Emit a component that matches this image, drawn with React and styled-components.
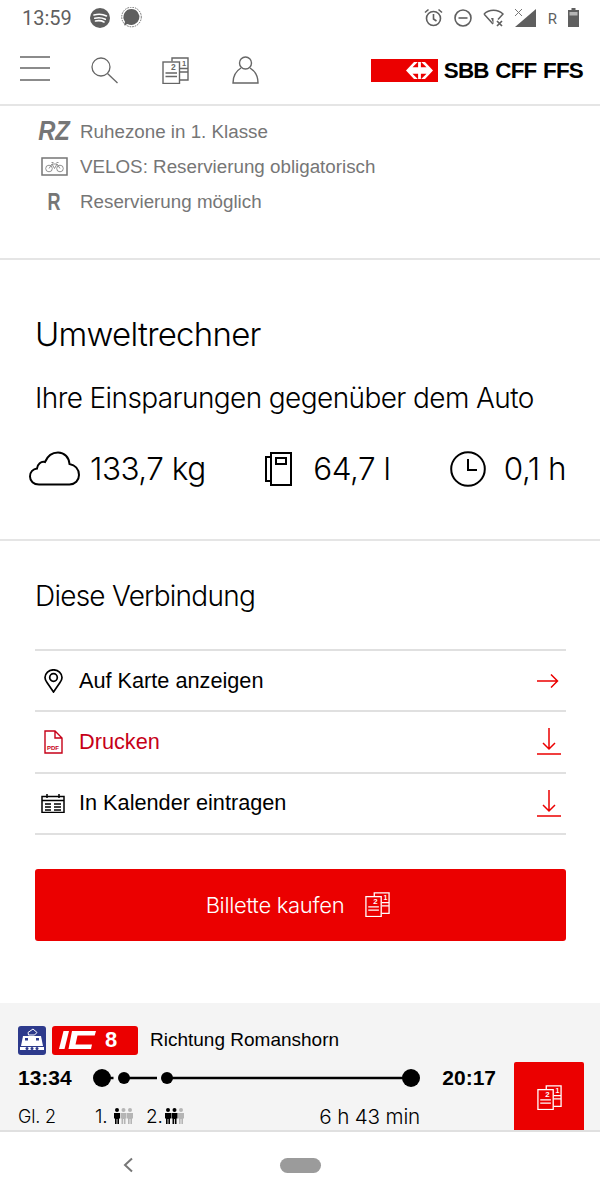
import styled, { createGlobalStyle } from "styled-components";

const GlobalStyle = createGlobalStyle`
  html, body {
    margin: 0;
    padding: 0;
    background: white;
  }
  * {
    box-sizing: border-box;
  }
`;

const RED = "#eb0000";
const LIGHT = `Inter, "Liberation Sans", sans-serif`;
const SANS = `"Liberation Sans", Arial, sans-serif`;

const Page = styled.div`
  width: 600px;
  height: 1200px;
  display: flex;
  flex-direction: column;
  overflow: hidden;
  font-family: ${SANS};
  color: black;
`;

const StatusBar = styled.div`
  height: 35px;
  display: flex;
  align-items: center;
  padding: 0 21px 0 22px;
  color: #5f5f5f;
`;

const Clock = styled.span`
  font-family: Roboto, sans-serif;
  font-size: 20px;
  width: 58px;
`;

const StatusLeft = styled.div`
  display: flex;
  align-items: center;
  gap: 10px;
  flex: 1;
`;

const StatusRight = styled.div`
  display: flex;
  align-items: center;
  gap: 11px;
`;

const RoamingR = styled.span`
  font-family: Roboto, sans-serif;
  font-size: 15px;
  margin: 2px 0 0 0;
`;

const Header = styled.div`
  height: 71px;
  border-bottom: 2px solid #e5e5e5;
  display: flex;
  align-items: center;
  padding: 1px 17px 0 20px;
`;

const NavIcons = styled.div`
  display: flex;
  align-items: center;
  flex: 1;
  gap: 43.5px;
  color: #666;
`;

const MenuButton = styled.span`
  display: flex;
  margin: 0 -2.5px 3px 0;
`;

const Logo = styled.div`
  display: flex;
  align-items: center;
  gap: 6px;
  margin-top: 1px;
`;

const LogoFlag = styled.div`
  width: 67px;
  height: 23px;
  background: ${RED};
  display: flex;
  align-items: center;
  justify-content: flex-end;
  padding-right: 5px;
`;

const LogoText = styled.span`
  font-family: ${SANS};
  font-weight: 700;
  font-size: 22.4px;
  letter-spacing: -0.75px;
  word-spacing: 1px;
`;

const Legend = styled.section`
  height: 154px;
  border-bottom: 2px solid #e5e5e5;
  padding: 8px 0 0 36px;
  display: flex;
  flex-direction: column;
`;

const LegendRow = styled.div`
  height: 35px;
  display: flex;
  align-items: center;
  gap: 8px;
  color: #767676;
  font-family: ${SANS};
  font-size: 18.8px;
`;

const LegendMark = styled.span`
  width: 36px;
  display: flex;
  justify-content: center;
  font-family: ${SANS};
  font-weight: 700;
  font-style: ${(p) => (p.italic ? "italic" : "normal")};
  font-size: ${(p) => p.size || 24}px;
  transform: scaleX(${(p) => p.squeeze || 1});
  color: #767676;
`;

const Impact = styled.section`
  height: 281px;
  border-bottom: 2px solid #e5e5e5;
  padding: 51px 34px 0 29px;
`;

const Title = styled.h2`
  margin: 0 0 0 6px;
  font-family: ${LIGHT};
  font-weight: 300;
  font-size: 33px;
  line-height: 46px;
  letter-spacing: -0.75px;
`;

const Subtitle = styled.p`
  margin: 21px 0 0 6px;
  font-family: ${LIGHT};
  font-weight: 300;
  font-size: 28px;
  line-height: 40px;
  letter-spacing: -0.6px;
`;

const Stats = styled.div`
  display: flex;
  justify-content: space-between;
  margin-top: 31px;
`;

const Stat = styled.div`
  display: flex;
  align-items: center;
  gap: ${(p) => p.gap}px;
  font-family: ${LIGHT};
  font-weight: 300;
  font-size: 31.5px;
  letter-spacing: -0.5px;
`;

const Connection = styled.section`
  flex: 1;
  padding: 35px 34px 0 35px;
`;

const SectionTitle = styled.h3`
  margin: 0;
  font-family: ${LIGHT};
  font-weight: 300;
  font-size: 28px;
  line-height: 40px;
  letter-spacing: -0.75px;
`;

const Actions = styled.div`
  margin-top: 33px;
  border-top: 2px solid #e0e0e0;
`;

const Action = styled.div`
  height: 61.3px;
  border-bottom: 2px solid #e0e0e0;
  display: flex;
  align-items: center;
  padding: 0 5px 0 6px;
  font-size: 21.7px;
  color: ${(p) => (p.danger ? "#c60018" : "black")};
`;

const ActionIcon = styled.span`
  width: 24px;
  margin-right: 14px;
  display: flex;
  justify-content: center;
`;

const ActionLabel = styled.span`
  flex: 1;
`;

const BuyButton = styled.div`
  margin-top: 34px;
  height: 72px;
  background: ${RED};
  border-radius: 3px;
  color: white;
  display: flex;
  align-items: center;
  justify-content: center;
  gap: 21px;
  padding-right: 5px;
  font-family: ${LIGHT};
  font-weight: 300;
  font-size: 22px;
  letter-spacing: -0.3px;
`;

const Journey = styled.section`
  height: 129px;
  background: #f4f4f4;
  border-bottom: 2px solid #e0e0e0;
  display: flex;
  padding-left: 18px;
  padding-right: 16px;
  justify-content: space-between;
`;

const JourneyInfo = styled.div`
  display: flex;
  flex-direction: column;
  width: 478px;
  padding-top: 22px;
`;

const LineRow = styled.div`
  display: flex;
  align-items: center;
  height: 30px;
`;

const TrainBadge = styled.span`
  width: 28px;
  height: 29px;
  border-radius: 3px;
  background: #2d3a8c;
  display: flex;
  align-items: center;
  justify-content: center;
`;

const LineBadge = styled.span`
  width: 86px;
  height: 29px;
  margin: 0 12px 0 6px;
  background: ${RED};
  border-radius: 3px;
  display: flex;
  align-items: center;
  gap: 9px;
  padding-left: 7px;
  color: white;
  font-weight: 700;
  font-size: 22px;
`;

const Direction = styled.span`
  font-size: 19px;
`;

const TimeRow = styled.div`
  display: flex;
  align-items: center;
  justify-content: space-between;
  height: 32px;
  margin-top: 7px;
`;

const Time = styled.span`
  font-weight: 700;
  font-size: 21px;
`;

const DetailRow = styled.div`
  display: flex;
  align-items: center;
  margin-top: 9px;
  height: 26px;
  font-family: ${LIGHT};
  font-weight: 300;
  font-size: 19px;
  letter-spacing: -0.2px;
`;

const Platform = styled.span`
  width: 77px;
  font-size: 18px;
`;

const Occupancy = styled.span`
  display: flex;
  align-items: center;
  width: 51px;
`;

const OccupancyLabel = styled.span`
  width: 19px;
`;

const Duration = styled.span`
  margin-left: auto;
  margin-right: 76px;
  font-size: 20.7px;
`;

const JourneyButton = styled.div`
  align-self: flex-end;
  width: 70px;
  height: 68px;
  background: ${RED};
  border-radius: 2px 2px 0 0;
  display: flex;
  align-items: center;
  justify-content: center;
  padding-top: 2px;
`;

const NavBar = styled.div`
  height: 68px;
  display: flex;
  align-items: center;
  padding: 0 0 2px 122px;
  gap: 146px;
`;

const HomePill = styled.span`
  width: 41px;
  height: 15px;
  border-radius: 8px;
  background: #9b9b9b;
`;

// drawings

function TicketsIcon({ size = 27, color = "currentColor" }) {
  return (
    <svg width={size} height={size} viewBox="0 0 27 27" fill="none" stroke={color} strokeWidth="1.4">
      <path d="M10 4.500V1h16v22h-8" />
      <rect x="1" y="5" width="16.500" height="21.500" />
      <path d="M3.500 16h11.500M3.500 19.500h11.500M18 11.500h8M18 15h8" />
      <text x="9" y="13" fontFamily="Liberation Sans" fontSize="8.500" fontWeight="700" fill={color} stroke="none">2</text>
      <text x="20" y="8.500" fontFamily="Liberation Sans" fontSize="7.500" fontWeight="700" fill={color} stroke="none">1</text>
    </svg>
  );
}

function Hamburger() {
  return (
    <svg width="30" height="25" viewBox="0 0 30 25" stroke="#666" strokeWidth="1.4">
      <path d="M0 1h30M0 12h30M0 24h30" />
    </svg>
  );
}

function SearchIcon() {
  return (
    <svg width="27" height="27" viewBox="0 0 27 27" fill="none" stroke="#666" strokeWidth="1.3">
      <circle cx="10" cy="10" r="9" />
      <path d="M16.500 16.500 26.500 26" />
    </svg>
  );
}

function UserIcon() {
  return (
    <svg width="27" height="28" viewBox="0 0 27 28" fill="none" stroke="#666" strokeWidth="1.4">
      <circle cx="13.500" cy="7" r="6" />
      <path d="M9 12C4 15 1 21 1 27h25c0-6-3-12-8-15" />
    </svg>
  );
}

function SpotifyIcon() {
  return (
    <svg width="20" height="20" viewBox="0 0 20 20">
      <circle cx="10" cy="10" r="10" fill="#5f5f5f" />
      <path d="M4 7c4-1 9-.8 12.500 1M4.800 10.200c3.500-.8 7.500-.5 10.500 1.100M5.500 13c3-.6 6-.4 8.500 1" fill="none" stroke="white" strokeWidth="1.600" strokeLinecap="round" />
    </svg>
  );
}

function MessageIcon() {
  return (
    <svg width="22" height="22" viewBox="0 0 22 22">
      <circle cx="11.500" cy="10" r="9.800" fill="none" stroke="#5f5f5f" strokeWidth="0.900" strokeDasharray="1.600 1" />
      <path d="M11.500 2a8 8 0 1 1-4 15L4 18.500l1-3.800A8 8 0 0 1 11.500 2z" fill="#5f5f5f" />
    </svg>
  );
}

function AlarmIcon() {
  return (
    <svg width="19" height="19" viewBox="0 0 19 19" fill="none" stroke="#5f5f5f" strokeWidth="1.600">
      <circle cx="9.500" cy="10.500" r="7" />
      <path d="M9.500 6v5l3 2M1 4.500 4.500 1.500M18 4.500 14.500 1.500" />
    </svg>
  );
}

function DndIcon() {
  return (
    <svg width="18" height="18" viewBox="0 0 18 18" fill="none" stroke="#5f5f5f" strokeWidth="1.600">
      <circle cx="9" cy="9" r="8" />
      <path d="M4.500 9h9" />
    </svg>
  );
}

function WifiIcon() {
  return (
    <svg width="21" height="19" viewBox="0 0 21 19" fill="none" stroke="#5f5f5f" strokeWidth="1.500">
      <path d="M1 6C6 1 15 1 20 6l-5 5.500M1 6l9 10" />
      <path d="M8 10 10.500 16 10.500 10z" fill="#5f5f5f" stroke="none" />
      <path d="M14 13l5 5M19 13l-5 5" strokeWidth="1.700" />
    </svg>
  );
}

function SignalIcon() {
  return (
    <svg width="22" height="18" viewBox="0 0 22 18">
      <path d="M21 0v18H0z" fill="#5f5f5f" />
      <path d="M0 0 7 7M7 0 0 7" fill="none" stroke="#777" strokeWidth="1" />
    </svg>
  );
}

function BatteryIcon() {
  return (
    <svg width="11" height="19" viewBox="0 0 11 19">
      <path d="M3.500 0h4v2h3.500v17H0V2h3.500z" fill="#5f5f5f" />
      <rect x="1.500" y="4" width="8" height="3.500" fill="#b5b5b5" />
    </svg>
  );
}

function SwissCross() {
  return (
    <svg width="27" height="17" viewBox="0 0 27 17" fill="white">
      <path d="M8 0h3.800L6.500 5.300h5.600V0h2.800v5.300h5.600L15.200 0H19l8 8.500-8 8.500h-3.800l5.300-5.300h-5.600V17h-2.800v-5.300H6.500l5.300 5.300H8L0 8.500z" />
    </svg>
  );
}

function BikeIcon() {
  return (
    <svg width="27" height="19" viewBox="0 0 27 19" fill="none" stroke="#767676">
      <rect x="1" y="1" width="25" height="17" strokeWidth="1.500" />
      <circle cx="8" cy="11.500" r="3.300" strokeWidth="0.800" />
      <circle cx="19" cy="11.500" r="3.300" strokeWidth="0.800" />
      <path d="M8 11.500 11 7h5l3 4.500M11 7l2.500 4.500L16 7M10.500 5.500h2M15.500 5.500h2" strokeWidth="0.800" />
    </svg>
  );
}

function CloudIcon() {
  return (
    <svg width="51" height="35" viewBox="0 0 51 35" fill="none" stroke="black" strokeWidth="2">
      <path d="M10 33.500C4.500 33.500 1 30 1 25.500c0-4.500 3.200-7.500 7-8 .5-4.500 4-7.500 8-6.500C18.500 5 23.500 1.500 29 1.500c6.500 0 11 5 11.500 11.500 5.500 1 9.500 5 9.500 11 0 5.500-4 9.500-9.500 9.500z" />
    </svg>
  );
}

function FuelIcon() {
  return (
    <svg width="27" height="34" viewBox="0 0 27 34" fill="none" stroke="black" strokeWidth="2">
      <rect x="6" y="1" width="20" height="32" />
      <path d="M6 5H1v24h5" />
      <rect x="11" y="6" width="10" height="6" />
    </svg>
  );
}

function ClockIcon() {
  return (
    <svg width="36" height="36" viewBox="0 0 36 36" fill="none" stroke="black" strokeWidth="2">
      <circle cx="18" cy="18" r="16.800" />
      <path d="M18 8v11h9" />
    </svg>
  );
}

function PinIcon() {
  return (
    <svg width="19" height="24" viewBox="0 0 19 24" fill="none" stroke="black" strokeWidth="1.700">
      <path d="M9.500 23 3 13.500C1.500 11.500 1 10 1 8.500a8.500 7.700 0 0 1 17 0c0 1.500-.5 3-2 5z" />
      <circle cx="9.500" cy="8.500" r="3.800" />
    </svg>
  );
}

function PdfIcon() {
  return (
    <svg width="19" height="24" viewBox="0 0 19 24" fill="none" stroke="#c60018" strokeWidth="1.400">
      <path d="M1 1h10l7 7v15H1zM11 1v7h7" />
      <text x="3" y="19.500" fontFamily="Liberation Sans" fontSize="6" fontWeight="700" fill="#c60018" stroke="none">PDF</text>
    </svg>
  );
}

function CalendarIcon() {
  return (
    <svg width="24" height="19" viewBox="0 0 24 19" fill="none" stroke="black" strokeWidth="1.500">
      <rect x="1" y="2.500" width="22" height="16" />
      <path d="M1 6.500h22M6 0v4M18 0v4" />
      <path d="M4 10h6M13 10h7M4 13h6M13 13h7M4 16h6M13 16h7" strokeWidth="1.300" />
    </svg>
  );
}

function ArrowRight() {
  return (
    <svg width="24" height="14" viewBox="0 0 24 14" fill="none" stroke={RED} strokeWidth="1.500">
      <path d="M0 7h20.500M14 .5 20.500 7 14 13.500" />
    </svg>
  );
}

function DownloadIcon() {
  return (
    <svg width="24" height="27" viewBox="0 0 24 27" fill="none" stroke={RED} strokeWidth="1.500">
      <path d="M12 0v21M6 15l6 6 6-6M0 26h24" />
    </svg>
  );
}

function TrainIcon() {
  return (
    <svg width="24" height="24" viewBox="0 0 24 24" fill="white">
      <path d="M8 4.500 13 1l4 3.500-2.500 2.500h-6z" fill="none" stroke="white" strokeWidth="1" />
      <path d="M3 8h18l2 10H1z" />
      <path d="M0 19h24v3H0z" />
      <rect x="5" y="10" width="3" height="2.500" fill="#2d3a8c" />
      <rect x="16" y="10" width="3" height="2.500" fill="#2d3a8c" />
      <circle cx="7" cy="20.500" r="1.500" fill="#2d3a8c" />
      <circle cx="12" cy="20.500" r="1.500" fill="#2d3a8c" />
      <circle cx="17" cy="20.500" r="1.500" fill="#2d3a8c" />
    </svg>
  );
}

function IcMark() {
  return (
    <svg width="37" height="18" viewBox="0 0 37 18" fill="white">
      <path d="M4.500 0h5.500L5.500 18H0zM13 0h24l-1.300 4.500H18.500L16.500 13.500H33L32 18H9.500z" />
    </svg>
  );
}

function Timeline() {
  return (
    <svg width="330" height="20" viewBox="0 0 330 20">
      <path d="M10 10h11.500M32 10h33M75 10h244" stroke="black" strokeWidth="2.500" />
      <circle cx="10" cy="10" r="9" />
      <circle cx="32" cy="10" r="6" />
      <circle cx="75" cy="10" r="6" />
      <circle cx="319" cy="10" r="9" />
    </svg>
  );
}

function People({ count }) {
  return (
    <svg width="19" height="16" viewBox="0 0 19 16">
      {[0, 1, 2].map((i) => (
        <g key={i} transform={`translate(${i * 6.500} 0)`} fill={i < count ? "black" : "#b5b5b5"}>
          <circle cx="3" cy="2" r="2" />
          <path d="M0 5h6v5.500H5V16H3.400v-5H2.600v5H1v-5.500H0z" />
        </g>
      ))}
    </svg>
  );
}

function ChevronLeft() {
  return (
    <svg width="12" height="16" viewBox="0 0 12 16" fill="none" stroke="#777" strokeWidth="2">
      <path d="M10 1.500 3 8l7 6.500" />
    </svg>
  );
}

export default function App() {
  return (
    <Page>
      <GlobalStyle />
      <StatusBar>
        <StatusLeft>
          <Clock>13:59</Clock>
          <SpotifyIcon />
          <MessageIcon />
        </StatusLeft>
        <StatusRight>
          <AlarmIcon />
          <DndIcon />
          <WifiIcon />
          <SignalIcon />
          <RoamingR>R</RoamingR>
          <BatteryIcon />
        </StatusRight>
      </StatusBar>

      <Header>
        <NavIcons>
          <MenuButton><Hamburger /></MenuButton>
          <SearchIcon />
          <TicketsIcon color="#666" />
          <UserIcon />
        </NavIcons>
        <Logo>
          <LogoFlag>
            <SwissCross />
          </LogoFlag>
          <LogoText>SBB CFF FFS</LogoText>
        </Logo>
      </Header>

      <Legend>
        <LegendRow>
          <LegendMark italic size={27} squeeze={0.88}>RZ</LegendMark>
          Ruhezone in 1. Klasse
        </LegendRow>
        <LegendRow>
          <LegendMark><BikeIcon /></LegendMark>
          VELOS: Reservierung obligatorisch
        </LegendRow>
        <LegendRow>
          <LegendMark squeeze={0.75}>R</LegendMark>
          Reservierung möglich
        </LegendRow>
      </Legend>

      <Impact>
        <Title>Umweltrechner</Title>
        <Subtitle>Ihre Einsparungen gegenüber dem Auto</Subtitle>
        <Stats>
          <Stat gap={10}><CloudIcon />133,7 kg</Stat>
          <Stat gap={21}><FuelIcon />64,7 l</Stat>
          <Stat gap={18}><ClockIcon />0,1 h</Stat>
        </Stats>
      </Impact>

      <Connection>
        <SectionTitle>Diese Verbindung</SectionTitle>
        <Actions>
          <Action>
            <ActionIcon><PinIcon /></ActionIcon>
            <ActionLabel>Auf Karte anzeigen</ActionLabel>
            <ArrowRight />
          </Action>
          <Action danger>
            <ActionIcon><PdfIcon /></ActionIcon>
            <ActionLabel>Drucken</ActionLabel>
            <DownloadIcon />
          </Action>
          <Action>
            <ActionIcon><CalendarIcon /></ActionIcon>
            <ActionLabel>In Kalender eintragen</ActionLabel>
            <DownloadIcon />
          </Action>
        </Actions>
        <BuyButton>
          Billette kaufen
          <TicketsIcon size={25} color="white" />
        </BuyButton>
      </Connection>

      <Journey>
        <JourneyInfo>
          <LineRow>
            <TrainBadge><TrainIcon /></TrainBadge>
            <LineBadge><IcMark />8</LineBadge>
            <Direction>Richtung Romanshorn</Direction>
          </LineRow>
          <TimeRow>
            <Time>13:34</Time>
            <Timeline />
            <Time>20:17</Time>
          </TimeRow>
          <DetailRow>
            <Platform>Gl. 2</Platform>
            <Occupancy><OccupancyLabel>1.</OccupancyLabel><People count={1} /></Occupancy>
            <Occupancy><OccupancyLabel>2.</OccupancyLabel><People count={2} /></Occupancy>
            <Duration>6 h 43 min</Duration>
          </DetailRow>
        </JourneyInfo>
        <JourneyButton>
          <TicketsIcon size={25} color="white" />
        </JourneyButton>
      </Journey>

      <NavBar>
        <ChevronLeft />
        <HomePill />
      </NavBar>
    </Page>
  );
}
